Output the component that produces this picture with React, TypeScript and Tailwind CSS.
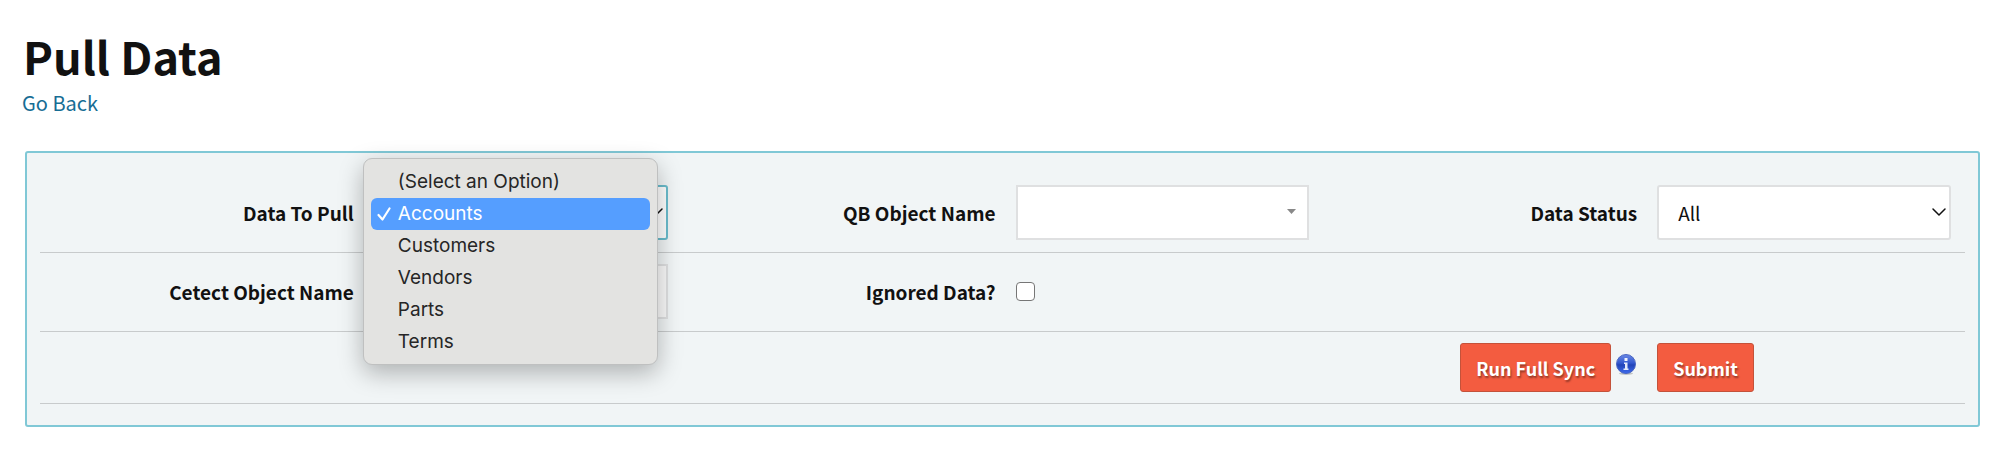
import { ChevronDown } from "lucide-react";
import type { ReactNode } from "react";

const pullOptions = [
  "(Select an Option)",
  "Accounts",
  "Customers",
  "Vendors",
  "Parts",
  "Terms",
];

const selected = "Accounts";

function Label({ htmlFor, children }: { htmlFor: string; children: ReactNode }) {
  return (
    <label htmlFor={htmlFor} className="pr-[7px] text-right text-[19px] font-bold">
      {children}
    </label>
  );
}

function SelectArrow() {
  return (
    <ChevronDown
      size={24}
      strokeWidth={1.5}
      className="pointer-events-none absolute right-0 top-[15px]"
    />
  );
}

function InfoIcon() {
  return (
    <svg width="20" height="22" viewBox="0 0 20 22" aria-hidden="true">
      <defs>
        <linearGradient id="info-fill" x1="0" y1="0" x2="0" y2="1">
          <stop offset="0" stopColor="#6b8ae6" />
          <stop offset="0.45" stopColor="#3358cf" />
          <stop offset="0.55" stopColor="#2244b8" />
          <stop offset="1" stopColor="#3d6bee" />
        </linearGradient>
      </defs>
      <ellipse cx="10" cy="19.5" rx="7" ry="1.5" fill="#000" opacity="0.2" />
      <circle cx="10" cy="10" r="9.5" fill="url(#info-fill)" stroke="#4a66c2" />
      <rect x="8.5" y="4" width="3" height="3" fill="#f1f4fd" />
      <path d="M8 8.500h3.500v6h1v1.500h-5v-1.500h1.500v-4.500h-1z" fill="#e4eafb" />
    </svg>
  );
}

function PullMenu() {
  return (
    <ul
      role="listbox"
      aria-label="Data To Pull"
      className="absolute -left-[11px] -top-[27px] z-10 w-[295px] rounded-[9px] border border-[#bfc0c0] bg-[#e3e3e1] px-[7px] py-[6px] pt-[7px] font-['Inter',sans-serif] text-[19px] leading-8 text-[#262626] shadow-[0_8px_24px_rgba(0,0,0,0.28)]"
    >
      {pullOptions.map((option) => (
        <li
          key={option}
          role="option"
          aria-selected={option === selected}
          className="flex items-center rounded-[6px] aria-selected:bg-[#559eff] aria-selected:text-white"
        >
          <span className="flex w-[27px] justify-center">
            {option === selected && (
              <svg width="14" height="14" viewBox="0 0 14 14" aria-hidden="true">
                <path
                  d="M1.500 8 5.500 12.500 12.500 1.500"
                  fill="none"
                  stroke="currentColor"
                  strokeWidth="2.2"
                  strokeLinecap="round"
                  strokeLinejoin="round"
                />
              </svg>
            )}
          </span>
          {option}
        </li>
      ))}
    </ul>
  );
}

const rowClass =
  "grid grid-cols-6 items-center border-b border-[#c8cbcc] pt-[11px] pb-3";
const fieldClass = "pl-[13px] pr-[14px]";
const selectClass =
  "block h-[55px] w-full appearance-none rounded-[3px] border-2 bg-white px-[19px] text-[19px] outline-none";
const buttonClass =
  "h-[49px] rounded-[3px] border border-[#c4523a] bg-[#f35c40] px-[15px] text-[18px] font-bold text-white [text-shadow:1px_2px_2px_rgba(0,0,0,0.4)]";

export default function App() {
  return (
    <main className="bg-white pt-[24px] pr-[19px] pb-[38px] pl-[22px] font-['Noto_Sans_CJK_SC',sans-serif] text-[20px] leading-[30px] text-[#111]">
      <h1 className="pl-px text-[45px] font-bold leading-[64px]">Pull Data</h1>
      <a href="#back" className="block w-fit text-[#176d94]">
        Go Back
      </a>

      <form
        className="ml-[3px] mt-[33px] rounded-[3px] border-2 border-[#80c8d6] bg-[#f1f5f6] px-[13px] py-[21px]"
        onSubmit={(e) => e.preventDefault()}
      >
        <div className={rowClass}>
          <Label htmlFor="data-to-pull">Data To Pull</Label>
          <div className={fieldClass}>
            <div className="relative">
              <select
                id="data-to-pull"
                defaultValue={selected}
                className={`${selectClass} border-[#6bbccc]`}
              >
                {pullOptions.map((option) => (
                  <option key={option}>{option}</option>
                ))}
              </select>
              <SelectArrow />
              <PullMenu />
            </div>
          </div>

          <Label htmlFor="qb-object-name">QB Object Name</Label>
          <div className={fieldClass}>
            <div className="relative">
              <select
                id="qb-object-name"
                className="block h-[55px] w-full appearance-none border-2 border-[#dfe0e1] bg-white px-[19px] outline-none"
              >
                <option></option>
              </select>
              <svg
                width="9"
                height="5"
                viewBox="0 0 9 5"
                className="pointer-events-none absolute right-[13px] top-[24px]"
              >
                <path d="M0 0h9L4.500 5z" fill="#888" />
              </svg>
            </div>
          </div>

          <Label htmlFor="data-status">Data Status</Label>
          <div className={fieldClass}>
            <div className="relative">
              <select id="data-status" className={`${selectClass} border-[#dfe0e1]`}>
                <option>All</option>
              </select>
              <SelectArrow />
            </div>
          </div>
        </div>

        <div className={rowClass}>
          <Label htmlFor="cetect-object-name">Cetect Object Name</Label>
          <div className={fieldClass}>
            <input
              id="cetect-object-name"
              type="text"
              className="block h-[55px] w-full border-2 border-[#dfe0e1] bg-[#fafafa] px-[19px] outline-none"
            />
          </div>
          <Label htmlFor="ignored-data">Ignored Data?</Label>
          <div className={fieldClass}>
            <input
              id="ignored-data"
              type="checkbox"
              className="block size-[19px] appearance-none rounded-[4px] border border-[#767676] bg-white"
            />
          </div>
        </div>

        <div className="grid grid-cols-6 border-b border-[#c8cbcc] py-[11px]">
          <div className="col-span-5 flex justify-end gap-[5px] pr-[8px]">
            <button type="button" className={buttonClass}>
              Run Full Sync
            </button>
            <button type="button" aria-label="About full sync" className="h-[44px]">
              <InfoIcon />
            </button>
          </div>
          <div className={fieldClass}>
            <button type="submit" className={buttonClass}>
              Submit
            </button>
          </div>
        </div>
      </form>
    </main>
  );
}
